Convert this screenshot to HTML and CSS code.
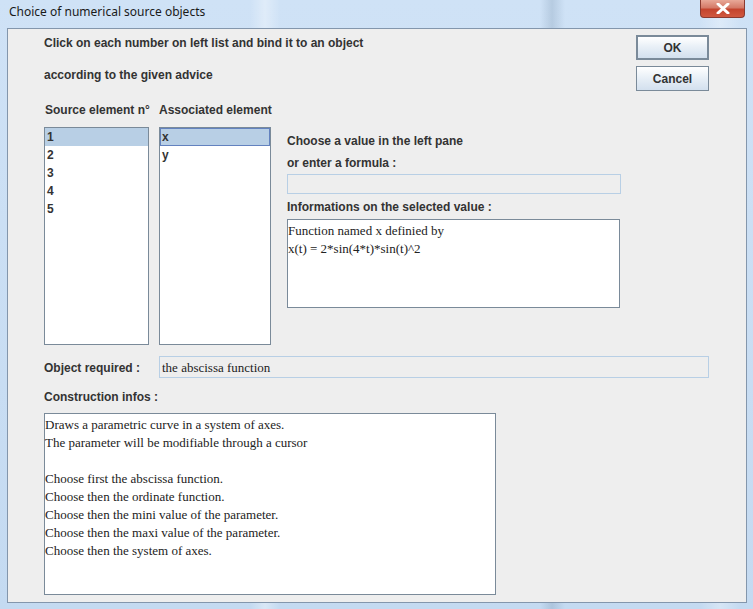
FILE: index.html
```html
<!DOCTYPE html>
<html lang="en">
<head>
    <meta charset="UTF-8">
    <title>Choice of numerical source objects</title>
    <link rel="stylesheet" href="styles.css">
</head>
<body>
    <div class="window">
        <div class="titlebar">
            <span class="title">Choice of numerical source objects</span>
            <div class="close">
                <svg width="14" height="11" viewBox="0 0 14 11">
                    <path d="M2 1 L12 10 M12 1 L2 10" stroke="#fff" stroke-width="3" stroke-linecap="round"/>
                </svg>
            </div>
        </div>

        <div class="panel">
            <div class="top">
                <div class="intro">
                    <p>Click on each number on left list and bind it to an object</p>
                    <p>according to the given advice</p>
                </div>
                <div class="buttons">
                    <button class="btn btn-default">OK</button>
                    <button class="btn">Cancel</button>
                </div>
            </div>

            <div class="heads">
                <span class="head-source">Source element n°</span>
                <span>Associated element</span>
            </div>

            <div class="lists-row">
                <ul class="list list-source">
                    <li class="selected">1</li>
                    <li>2</li>
                    <li>3</li>
                    <li>4</li>
                    <li>5</li>
                </ul>
                <ul class="list list-assoc">
                    <li class="selected focused">x</li>
                    <li>y</li>
                </ul>
                <div class="value-pane">
                    <div class="label">Choose a value in the left pane</div>
                    <div class="label label-formula">or enter a formula :</div>
                    <div class="field formula"></div>
                    <div class="label label-info">Informations on the selected value :</div>
                    <div class="textbox info-box">
                        <div>Function named x definied by</div>
                        <div>x(t) = 2*sin(4*t)*sin(t)^2</div>
                    </div>
                </div>
            </div>

            <div class="object-row">
                <span class="label object-label">Object required :</span>
                <div class="field object-field">the abscissa function</div>
            </div>

            <div class="label construction-label">Construction infos :</div>
            <div class="textbox construction-box">
                <div>Draws a parametric curve in a system of axes.</div>
                <div>The parameter will be modifiable through a cursor</div>
                <div>&nbsp;</div>
                <div>Choose first the abscissa function.</div>
                <div>Choose then the ordinate function.</div>
                <div>Choose then the mini value of the parameter.</div>
                <div>Choose then the maxi value of the parameter.</div>
                <div>Choose then the system of axes.</div>
            </div>
        </div>
    </div>
</body>
</html>
```

FILE: styles.css
```css
body {
    margin: 0;
    font-family: 'Liberation Sans', Arial, sans-serif;
}
.window {
    width: 753px;
    height: 609px;
    box-sizing: border-box;
    padding: 0 6px 0 7px;
    background:
        linear-gradient(90deg,
            rgba(255,255,255,0) 0px, rgba(255,255,255,0) 250px,
            rgba(255,255,255,0.35) 265px, rgba(255,255,255,0) 280px,
            rgba(0,0,0,0) 540px, rgba(70,100,130,0.18) 552px, rgba(0,0,0,0) 565px,
            rgba(0,0,0,0) 700px, rgba(255,255,255,0.3) 720px, rgba(0,0,0,0) 740px),
        linear-gradient(180deg, #cfe2f6 0%, #c4daf1 100%);
    overflow: hidden;
}
.titlebar {
    height: 28px;
    display: flex;
    justify-content: space-between;
    align-items: flex-start;
    padding-left: 2px;
}
.title {
    font-family: 'Noto Sans', 'Open Sans', sans-serif;
    font-size: 12px;
    line-height: 28px;
    color: #1a1a1a;
    margin-top: -2px;
}
.close {
    width: 45px;
    height: 18px;
    box-sizing: border-box;
    border: 1px solid #8a3a30;
    border-top: none;
    border-radius: 0 0 4px 4px;
    background: linear-gradient(180deg, #e8a898 0%, #d47a68 45%, #c4442e 55%, #d0583f 100%);
    display: flex;
    align-items: center;
    justify-content: center;
    margin-right: 2px;
}
.panel {
    border: 1px solid #8396ac;
    background-color: #eeeeee;
    padding: 6px 37px 7px 36px;
    color: #333333;
    font-size: 12px;
    font-weight: bold;
}
.top {
    display: flex;
    justify-content: space-between;
    height: 56px;
}
.intro p {
    margin: 0;
    line-height: 16px;
}
.intro p + p {
    margin-top: 16px;
}
.buttons {
    display: flex;
    flex-direction: column;
    gap: 6px;
    width: 73px;
}
.btn {
    height: 25px;
    box-sizing: border-box;
    border: 1px solid #7a8a99;
    background: linear-gradient(180deg, #ffffff 0%, #e9f0f7 45%, #d3e0ee 100%);
    font-family: 'Liberation Sans', Arial, sans-serif;
    font-size: 12px;
    font-weight: bold;
    color: #333333;
    padding: 0;
}
.btn-default {
    border: 2px solid #7a8a99;
}
.heads {
    margin-top: 11px;
    display: flex;
    line-height: 16px;
}
.head-source {
    width: 114px;
    padding-left: 1px;
}
.lists-row {
    margin-top: 9px;
    display: flex;
}
.list {
    list-style: none;
    margin: 0;
    padding: 0;
    height: 218px;
    box-sizing: border-box;
    border: 1px solid #7a8a99;
    background: #ffffff;
}
.list li {
    height: 18px;
    line-height: 19px;
    padding-left: 2px;
    box-sizing: border-box;
}
.list li.selected {
    background-color: #b8cfe5;
}
.list li.focused {
    border: 1px solid #6382bf;
    padding-left: 1px;
    line-height: 17px;
}
.list-source {
    width: 105px;
}
.list-assoc {
    width: 112px;
    margin-left: 10px;
}
.value-pane {
    margin-left: 16px;
    padding-top: 6px;
    width: 334px;
}
.label {
    line-height: 16px;
}
.label-formula {
    margin-top: 6px;
}
.field {
    box-sizing: border-box;
    border: 1px solid #b8cfe5;
    background: #eeeeee;
}
.formula {
    margin-top: 3px;
    height: 20px;
    width: 334px;
}
.label-info {
    margin-top: 5px;
}
.textbox {
    box-sizing: border-box;
    border: 1px solid #7a8a99;
    background: #ffffff;
    padding-top: 2px;
    font-family: 'Liberation Serif', 'Times New Roman', serif;
    font-weight: normal;
    font-size: 13px;
    line-height: 18px;
    color: #222222;
}
.info-box {
    margin-top: 4px;
    height: 89px;
    width: 333px;
}
.object-row {
    margin-top: 11px;
    display: flex;
    align-items: center;
}
.object-label {
    width: 115px;
    padding-top: 1px;
}
.object-field {
    width: 550px;
    height: 22px;
    line-height: 22px;
    padding-left: 2px;
    font-family: 'Liberation Serif', 'Times New Roman', serif;
    font-weight: normal;
    font-size: 13px;
    color: #222222;
}
.construction-label {
    margin-top: 11px;
}
.construction-box {
    margin-top: 8px;
    height: 182px;
    width: 452px;
}
```
